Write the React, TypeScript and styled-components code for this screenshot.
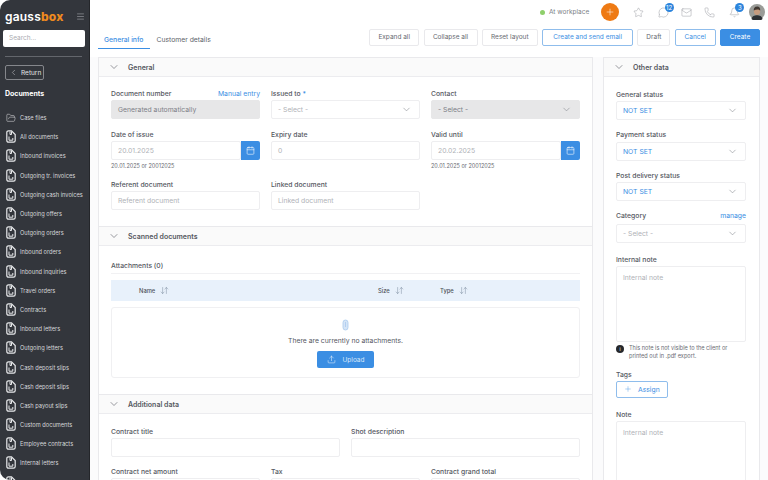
import styled, { createGlobalStyle } from 'styled-components'
import { ReactNode } from 'react'
import {
  ArrowDownUp, Bell, Calendar, ChevronDown, ChevronLeft, FolderOpen, Mail, Menu, MessageCircle,
  Phone, Plus, Star, Upload,
} from 'lucide-react'

const GlobalStyle = createGlobalStyle`
  html, body { margin: 0; padding: 0; height: 480px; overflow: hidden; background: #fff; }
  body { font-family: Inter, "Liberation Sans", sans-serif; color: #4b4e57; }
  * { box-sizing: border-box; }
`

const BLUE = '#3b8ee3'

const documents = [
  'All documents', 'Inbound invoices', 'Outgoing tr. invoices', 'Outgoing cash invoices', 'Outgoing offers',
  'Outgoing orders', 'Inbound orders', 'Inbound inquiries', 'Travel orders', 'Contracts', 'Inbound letters',
  'Outgoing letters', 'Cash deposit slips', 'Cash deposit slips', 'Cash payout slips', 'Custom documents',
  'Employee contracts', 'Internal letters', '',
]

const DocIcon = () => (
  <svg width="10" height="13" viewBox="0 0 10 13" fill="none" stroke="#e8e9eb" strokeWidth="1.2">
    <path d="M2.500.8h3l3.700 3.700v6a1.700 1.700 0 0 1-1.700 1.700h-5A1.700 1.700 0 0 1 .8 10.500v-8A1.700 1.700 0 0 1 2.500.8z" />
    <path d="M4 1.500v3h1.500V1.500M3 6.500v3.700h3.800V8" strokeWidth="1" />
  </svg>
)

const ClipIcon = () => (
  <svg width="7" height="12" viewBox="0 0 7 12" fill="#d5e5f7" stroke="#a9c9ee" strokeWidth="0.8">
    <path d="M1 3.500a2.500 2.500 0 0 1 5 0v5a2.500 2.500 0 0 1-5 0z" />
    <path d="M3.500 3v5" fill="none" />
  </svg>
)

const Avatar = () => (
  <svg width="16" height="16" viewBox="0 0 16 16">
    <circle cx="8" cy="8" r="8" fill="#9a9c98" />
    <ellipse cx="8" cy="7" rx="3.200" ry="4" fill="#c59b7f" />
    <path d="M4.800 6.500C4.500 3 7 2.500 8.500 2.500s3 1.200 2.700 4C10 5 7 5 4.800 6.500z" fill="#3f3730" />
    <path d="M2.500 15c.5-3 3-3.800 5.500-3.800s5 .8 5.500 3.800A8 8 0 0 1 2.500 15z" fill="#2d3034" />
  </svg>
)

const Field = ({ label, aside, children }: { label: ReactNode; aside?: string; children: ReactNode }) => (
  <FieldBox>
    <LabelRow>
      <Label>{label}</Label>
      {aside && <LabelLink>{aside}</LabelLink>}
    </LabelRow>
    {children}
  </FieldBox>
)

const SelectBox = ({ text, status, disabled }: { text: string; status?: boolean; disabled?: boolean }) => (
  <Input $disabled={disabled} $status={status}>
    <span>{text}</span>
    <ChevronDown size={11} strokeWidth={1.2} color="#7d8087" />
  </Input>
)

const DateBox = ({ value }: { value: string }) => (
  <DateWrap>
    <Input $flat>{value}</Input>
    <DateButton><Calendar size={9} strokeWidth={1.5} color="#fff" /></DateButton>
  </DateWrap>
)

const Section = ({ title, children }: { title: string; children: ReactNode }) => (
  <>
    <SectionHead>
      <ChevronDown size={12} strokeWidth={1.2} color="#55585f" />
      <span>{title}</span>
    </SectionHead>
    {children}
  </>
)

const SortHead = ({ name }: { name: string }) => (
  <HeadCell>
    {name}
    <ArrowDownUp size={9} strokeWidth={1.1} color="#64758c" />
  </HeadCell>
)

const App = () => {
  return (
    <Page>
      <GlobalStyle />
      <Sidebar>
        <LogoRow>
          <Logo>gauss<b>box</b></Logo>
          <Menu size={9} color="#a9abb0" strokeWidth={1.5} />
        </LogoRow>
        <Search>Search...</Search>
        <Divider />
        <ReturnButton><ChevronLeft size={9} strokeWidth={1.2} />Return</ReturnButton>
        <SideTitle>Documents</SideTitle>
        <SideList>
          <SideItem><FolderOpen size={10} strokeWidth={1.2} color="#e8e9eb" /><span>Case files</span></SideItem>
          {documents.map((name, i) => (
            <SideItem key={i}><DocIcon /><span>{name}</span></SideItem>
          ))}
        </SideList>
      </Sidebar>

      <Main>
        <TopBar>
          <StatusDot />
          <StatusText>At workplace</StatusText>
          <AddButton><Plus size={10} strokeWidth={1.3} color="#fff" /></AddButton>
          <TopIcon $w={27}><Star size={11} strokeWidth={1} color="#909399" /></TopIcon>
          <TopIcon $w={23}>
            <MessageCircle size={11} strokeWidth={1} color="#909399" />
            <Badge>12</Badge>
          </TopIcon>
          <TopIcon $w={23}><Mail size={11} strokeWidth={1} color="#909399" /></TopIcon>
          <TopIcon $w={23}><Phone size={11} strokeWidth={1} color="#909399" /></TopIcon>
          <TopIcon $w={26}>
            <Bell size={11} strokeWidth={1} color="#909399" />
            <Badge>3</Badge>
          </TopIcon>
          <AvatarSlot><Avatar /></AvatarSlot>
        </TopBar>

        <TabBar>
          <Tabs>
            <Tab $active>General info</Tab>
            <Tab>Customer details</Tab>
          </Tabs>
          <Actions>
            <Action $w={50}>Expand all</Action>
            <Action $w={54}>Collapse all</Action>
            <Action $w={56}>Reset layout</Action>
            <Action $w={91} $kind="outline">Create and send email</Action>
            <Action $w={33}>Draft</Action>
            <Action $w={41} $kind="outline">Cancel</Action>
            <Action $w={40} $kind="solid">Create</Action>
          </Actions>
        </TabBar>

        <Content>
          <LeftPanel>
            <Section title="General">
              <FormBody>
                <Grid3>
                  <Field label="Document number" aside="Manual entry">
                    <Input $disabled>Generated automatically</Input>
                  </Field>
                  <Field label={<>Issued to <Req>*</Req></>}><SelectBox text="- Select -" /></Field>
                  <Field label="Contact"><SelectBox text="- Select -" disabled /></Field>
                  <FieldBox>
                    <Field label="Date of issue"><DateBox value="20.01.2025" /></Field>
                    <Hint>20.01.2025 or 20012025</Hint>
                  </FieldBox>
                  <FieldBox>
                    <Field label="Expiry date"><Input>0</Input></Field>
                  </FieldBox>
                  <FieldBox>
                    <Field label="Valid until"><DateBox value="20.02.2025" /></Field>
                    <Hint>20.01.2025 or 20012025</Hint>
                  </FieldBox>
                  <Field label="Referent document"><Input>Referent document</Input></Field>
                  <Field label="Linked document"><Input>Linked document</Input></Field>
                </Grid3>
              </FormBody>
            </Section>

            <Section title="Scanned documents">
              <ScanBody>
                <AttachTitle>Attachments (0)</AttachTitle>
                <TableHead>
                  <SortHead name="Name" />
                  <SortHead name="Size" />
                  <SortHead name="Type" />
                </TableHead>
                <EmptyBox>
                  <ClipIcon />
                  <EmptyText>There are currently no attachments.</EmptyText>
                  <UploadButton><Upload size={9} strokeWidth={1.3} />Upload</UploadButton>
                </EmptyBox>
              </ScanBody>
            </Section>

            <Section title="Additional data">
              <FormBody>
                <Grid2>
                  <Field label="Contract title"><Input /></Field>
                  <Field label="Shot description"><Input /></Field>
                </Grid2>
                <Grid3 $top={8}>
                  <Field label="Contract net amount"><Input /></Field>
                  <Field label="Tax"><Input /></Field>
                  <Field label="Contract grand total"><Input /></Field>
                </Grid3>
              </FormBody>
            </Section>
          </LeftPanel>

          <RightPanel>
            <Section title="Other data">
              <RightBody>
                <Field label="General status"><SelectBox text="NOT SET" status /></Field>
                <Field label="Payment status"><SelectBox text="NOT SET" status /></Field>
                <Field label="Post delivery status"><SelectBox text="NOT SET" status /></Field>
                <CategoryField>
                  <Field label="Category" aside="manage"><SelectBox text="- Select -" /></Field>
                </CategoryField>
                <NoteField>
                  <Field label="Internal note"><TextArea $h={76}>Internal note</TextArea></Field>
                  <NoteInfo>
                    <InfoDot>i</InfoDot>
                    <span>This note is not visible to the client or printed out in .pdf export.</span>
                  </NoteInfo>
                </NoteField>
                <TagsField>
                  <Field label="Tags">
                    <AssignButton><Plus size={8} strokeWidth={1.2} />Assign</AssignButton>
                  </Field>
                </TagsField>
                <NoteField>
                  <Field label="Note"><TextArea $h={70}>Internal note</TextArea></Field>
                </NoteField>
              </RightBody>
            </Section>
          </RightPanel>
        </Content>
      </Main>
    </Page>
  )
}

export default App

const Page = styled.div`
  display: flex;
  width: 768px;
  height: 480px;
  overflow: hidden;
  background: #fff;
`

const Sidebar = styled.aside`
  width: 90px;
  height: 480px;
  flex: none;
  padding: 0 4px 0 3px;
  background: #33363c;
  border-right: 1px solid #24262a;
  border-radius: 10px 0 0 10px;
  overflow: hidden;
`

const LogoRow = styled.div`
  display: flex;
  align-items: center;
  justify-content: space-between;
  height: 30px;
  padding: 2px 0 0 2px;
`

const Logo = styled.div`
  font-size: 12px;
  font-weight: 600;
  letter-spacing: 0.2px;
  color: #fff;
  b { color: #ee8a1f; font-weight: 800; }
`

const Search = styled.div`
  height: 17px;
  width: 82px;
  padding: 0 6px;
  background: #fff;
  border-radius: 2px;
  font-size: 6.500px;
  line-height: 17px;
  color: #a9abb1;
`

const Divider = styled.div`
  height: 1px;
  margin: 9px 3px 8px 2px;
  background: #63666c;
`

const ReturnButton = styled.div`
  display: flex;
  align-items: center;
  gap: 3px;
  width: 39px;
  height: 15px;
  margin-left: 2px;
  padding-left: 3px;
  border: 1px solid #85878c;
  border-radius: 2px;
  color: #e4e5e8;
  font-size: 6.500px;
`

const SideTitle = styled.div`
  margin: 8px 0 8px 2px;
  height: 12px;
  line-height: 12px;
  color: #fff;
  font-size: 7px;
  font-weight: 700;
`

const SideList = styled.div`
  display: flex;
  flex-direction: column;
  margin-left: 3px;
`

const SideItem = styled.div`
  display: flex;
  align-items: center;
  flex: none;
  height: 19.200px;
  color: #d6d7da;
  font-size: 5.700px;
  white-space: nowrap;
  svg { flex: none; }
  span { margin-left: 4px; }
`

const Main = styled.main`
  flex: 1;
  min-width: 0;
  height: 480px;
  display: flex;
  flex-direction: column;
  background: #fbfbfc;
  overflow: hidden;
`

const TopBar = styled.header`
  flex: none;
  height: 24px;
  display: flex;
  align-items: center;
  justify-content: flex-end;
  padding-right: 3px;
  background: #fff;
  box-shadow: 0 1px 1px #f1f1f3;
`

const StatusDot = styled.span`
  width: 5px;
  height: 5px;
  border-radius: 50%;
  background: #8fcf6b;
`

const StatusText = styled.span`
  margin-left: 4px;
  width: 42px;
  font-size: 6.500px;
  white-space: nowrap;
  color: #7c7f86;
`

const AddButton = styled.span`
  width: 18px;
  height: 18px;
  margin: 0 6px 0 10px;
  display: flex;
  align-items: center;
  justify-content: center;
  border-radius: 50%;
  background: #ee7a14;
`

const TopIcon = styled.span<{ $w: number }>`
  position: relative;
  width: ${p => p.$w}px;
  height: 24px;
  display: flex;
  align-items: center;
  justify-content: center;
`

const Badge = styled.span`
  position: absolute;
  top: 3px;
  left: 55%;
  min-width: 9px;
  height: 9px;
  padding: 0 1px;
  border-radius: 5px;
  background: #2b84dc;
  color: #fff;
  font-size: 6px;
  line-height: 9px;
  text-align: center;
`

const AvatarSlot = styled.span`
  display: flex;
  margin-left: 2px;
`

const TabBar = styled.div`
  flex: none;
  height: 33px;
  display: flex;
  align-items: flex-start;
  justify-content: space-between;
  padding: 5px 8px 0 8px;
  background: #fff;
`

const Tabs = styled.div`
  display: flex;
  height: 20px;
`

const Tab = styled.div<{ $active?: boolean }>`
  height: 20px;
  padding: 0 7px 0 6px;
  font-size: 6.800px;
  line-height: 22px;
  font-weight: ${p => (p.$active ? 500 : 400)};
  color: ${p => (p.$active ? BLUE : '#60636a')};
  border-bottom: 1px solid ${p => (p.$active ? BLUE : 'transparent')};
`

const Actions = styled.div`
  display: flex;
  gap: 4.300px;
`

const Action = styled.div<{ $w: number; $kind?: 'outline' | 'solid' }>`
  width: ${p => p.$w}px;
  height: 17px;
  border-radius: 2px;
  text-align: center;
  font-size: 6.500px;
  line-height: 15px;
  white-space: nowrap;
  background: ${p => (p.$kind === 'solid' ? BLUE : '#fff')};
  color: ${p => (p.$kind === 'solid' ? '#fff' : p.$kind === 'outline' ? BLUE : '#666970')};
  border: 1px solid ${p => (p.$kind === 'solid' ? BLUE : p.$kind === 'outline' ? '#8fbdec' : '#e9e9ec')};
`

const Content = styled.div`
  flex: 1;
  min-height: 0;
  display: flex;
  gap: 10px;
  padding: 0 8px;
`

const LeftPanel = styled.section`
  width: 495px;
  flex: none;
  height: 430px;
  background: #fff;
  border: 1px solid #e9e9ec;
  border-bottom: 0;
  overflow: hidden;
`

const RightPanel = styled(LeftPanel)`
  width: 157px;
`

const SectionHead = styled.div`
  height: 19px;
  display: flex;
  align-items: center;
  gap: 8px;
  padding-left: 9px;
  background: #fafafa;
  border-bottom: 1px solid #ececef;
  font-size: 7px;
  font-weight: 600;
  color: #55585f;
  div + & { border-top: 1px solid #e9e9ec; height: 20px; }
`

const FormBody = styled.div`
  padding: 10px 12px 16px 12px;
`

const Grid3 = styled.div<{ $top?: number }>`
  display: grid;
  grid-template-columns: repeat(3, 149px);
  column-gap: 11px;
  row-gap: 9px;
  margin-top: ${p => p.$top ?? 0}px;
`

const Grid2 = styled.div`
  display: grid;
  grid-template-columns: repeat(2, 229px);
  column-gap: 11px;
  margin-top: 1px;
`

const FieldBox = styled.div`
  min-width: 0;
`

const LabelRow = styled.div`
  display: flex;
  align-items: center;
  justify-content: space-between;
  height: 12px;
  margin-bottom: 1px;
`

const CategoryField = styled.div`
  ${LabelRow} { margin-bottom: 2px; }
`

const NoteField = styled.div`
  margin-top: 2px;
`

const TagsField = styled.div`
  ${LabelRow} { margin-bottom: 0; }
`

const Label = styled.span`
  font-size: 6.800px;
  font-weight: 500;
  color: #55585f;
`

const Req = styled.span`
  color: ${BLUE};
`

const LabelLink = styled.span`
  font-size: 6.800px;
  color: ${BLUE};
`

const Input = styled.div<{ $disabled?: boolean; $status?: boolean; $flat?: boolean }>`
  height: 19px;
  display: flex;
  align-items: center;
  justify-content: space-between;
  padding: 0 7px 0 6px;
  background: ${p => (p.$disabled ? '#e7e7e8' : '#fff')};
  border: 1px solid ${p => (p.$disabled ? '#e7e7e8' : '#eeeef0')};
  border-radius: 2px;
  font-size: 6.800px;
  white-space: nowrap;
  color: ${p => (p.$status ? BLUE : p.$disabled ? '#7d8087' : '#b0b2b7')};
  flex: ${p => (p.$flat ? 1 : 'none')};
`

const DateWrap = styled.div`
  display: flex;
`

const DateButton = styled.span`
  width: 19px;
  height: 19px;
  display: flex;
  align-items: center;
  justify-content: center;
  flex: none;
  background: ${BLUE};
  border-radius: 0 2px 2px 0;
`

const Hint = styled.div`
  height: 8px;
  margin-top: 1px;
  font-size: 5.500px;
  line-height: 10px;
  color: #676a71;
`

const ScanBody = styled.div`
  padding: 15px 12px 16px 12px;
`

const AttachTitle = styled.div`
  height: 13px;
  border-bottom: 1px solid #f1f1f3;
  font-size: 6.800px;
  font-weight: 500;
  color: #55585f;
`

const TableHead = styled.div`
  display: grid;
  grid-template-columns: 239px 62px 1fr;
  align-items: center;
  height: 21px;
  margin-top: 6px;
  padding-left: 28px;
  background: #e8f1fb;
`

const HeadCell = styled.div`
  display: flex;
  align-items: center;
  gap: 5px;
  font-size: 5.800px;
  font-weight: 500;
  color: #4d5159;
`

const EmptyBox = styled.div`
  height: 71px;
  margin-top: 6px;
  padding-top: 11px;
  display: flex;
  flex-direction: column;
  align-items: center;
  border: 1px solid #f0f0f2;
  border-radius: 3px;
`

const EmptyText = styled.div`
  margin-top: 5px;
  height: 10px;
  font-size: 6.800px;
  line-height: 10px;
  color: #55585f;
`

const UploadButton = styled.div`
  display: flex;
  align-items: center;
  justify-content: center;
  gap: 7px;
  width: 57px;
  height: 17px;
  margin-top: 5px;
  background: ${BLUE};
  border-radius: 2px;
  color: #d8e8fa;
  font-size: 6.500px;
  svg { color: #fff; }
`

const RightBody = styled.div`
  display: flex;
  flex-direction: column;
  gap: 8.500px;
  padding: 11px 13px 0 12px;
`

const TextArea = styled.div<{ $h: number }>`
  height: ${p => p.$h}px;
  padding: 6px;
  margin-top: 1px;
  border: 1px solid #eeeef0;
  border-radius: 2px;
  font-size: 6.800px;
  color: #b0b2b7;
`

const NoteInfo = styled.div`
  display: flex;
  gap: 5px;
  margin-top: 3px;
  font-size: 5.600px;
  line-height: 7.500px;
  color: #696c73;
`

const InfoDot = styled.span`
  flex: none;
  width: 8px;
  height: 8px;
  border-radius: 50%;
  background: #26282c;
  color: #fff;
  font-size: 5px;
  line-height: 8px;
  text-align: center;
`

const AssignButton = styled.div`
  display: flex;
  align-items: center;
  gap: 6px;
  width: 52px;
  height: 17px;
  padding-left: 7px;
  border: 1px solid #8fbdec;
  border-radius: 2px;
  color: ${BLUE};
  font-size: 6.800px;
`
